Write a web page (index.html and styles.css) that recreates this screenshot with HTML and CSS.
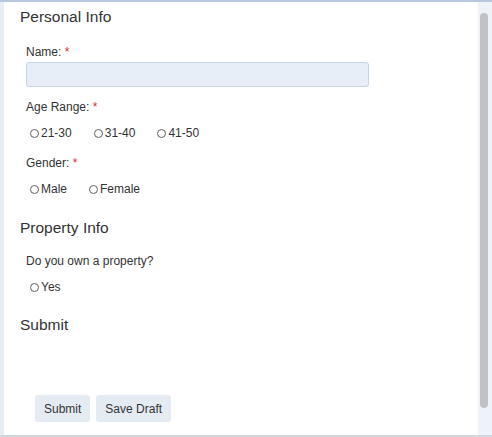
FILE: index.html
```html
<!DOCTYPE html>
<html lang="en">
<head>
<meta charset="utf-8">
<title>Form</title>
<link rel="stylesheet" href="styles.css">
</head>
<body>
<div class="frame">
  <div class="rail"></div>
  <main class="main">
    <section class="section section-first">
      <h2 class="section-title">Personal Info</h2>
      <div class="fields">
        <div class="field">
          <label class="label label-text" for="name">Name: <span class="req">*</span></label>
          <input class="input" id="name" type="text">
        </div>
        <div class="field field-age">
          <div class="label">Age Range: <span class="req">*</span></div>
          <div class="options">
            <label class="option"><input class="radio" type="radio" name="age">21-30</label>
            <label class="option"><input class="radio" type="radio" name="age">31-40</label>
            <label class="option"><input class="radio" type="radio" name="age">41-50</label>
          </div>
        </div>
        <div class="field field-gender">
          <div class="label">Gender: <span class="req">*</span></div>
          <div class="options">
            <label class="option"><input class="radio" type="radio" name="gender">Male</label>
            <label class="option"><input class="radio" type="radio" name="gender">Female</label>
          </div>
        </div>
      </div>
    </section>
    <section class="section">
      <h2 class="section-title">Property Info</h2>
      <div class="fields fields-tight">
        <div class="field">
          <div class="label">Do you own a property?</div>
          <div class="options">
            <label class="option"><input class="radio" type="radio" name="own">Yes</label>
          </div>
        </div>
      </div>
    </section>
    <section class="section section-submit">
      <h2 class="section-title">Submit</h2>
    </section>
    <div class="actions">
      <button class="btn" type="button">Submit</button>
      <button class="btn" type="button">Save Draft</button>
    </div>
  </main>
  <div class="scrollbar"><div class="thumb"></div></div>
</div>
</body>
</html>
```

FILE: styles.css
```css
* {
  box-sizing: border-box;
}

html, body {
  margin: 0;
  padding: 0;
  background: #ffffff;
}

body {
  font-family: "Liberation Sans", Arial, sans-serif;
  color: #333333;
  font-size: 12px;
}

.frame {
  display: flex;
  height: 437px;
  border-top: 2px solid #b8c9df;
  border-bottom: 2px solid #d0d8de;
}

.rail {
  width: 4px;
  background: #e8eef5;
}

.main {
  flex: 1;
  display: flex;
  flex-direction: column;
}

.section-first {
  padding-top: 6px;
}

.section + .section {
  margin-top: 22px;
}

.section-submit {
  margin-top: 21px !important;
}

.section-title {
  margin: 0;
  padding-left: 16px;
  font-size: 15.5px;
  line-height: 18px;
  font-weight: normal;
  color: #333333;
}

.fields {
  padding-left: 22px;
  padding-top: 19px;
}

.fields-tight {
  padding-top: 17px;
}

.field-age {
  margin-top: 13px;
}

.field-gender {
  margin-top: 15px;
}

.label {
  display: block;
  line-height: 14px;
  margin-bottom: 11px;
}

.label-text {
  margin-bottom: 3px;
}

.req {
  color: #e0282e;
}

.input {
  display: block;
  width: 343px;
  height: 25px;
  margin: 0;
  background: #e8eef8;
  border: 1px solid #c6d4ea;
  border-radius: 3px;
  font: inherit;
  padding: 0 6px;
}

.options {
  display: flex;
  align-items: center;
  gap: 18px;
  height: 16px;
}

.option {
  display: flex;
  align-items: center;
  line-height: 16px;
}

.radio {
  appearance: none;
  -webkit-appearance: none;
  width: 9px;
  height: 9px;
  margin: 0 2px 0 4px;
  border: 1px solid #5f5f5f;
  border-radius: 50%;
  background: #ffffff;
}

.actions {
  display: flex;
  gap: 6px;
  margin-top: 61px;
  padding-left: 31px;
}

.btn {
  height: 27px;
  padding: 0 9px;
  border: none;
  border-radius: 3px;
  background: #e5ebf3;
  color: #333333;
  font: inherit;
  font-size: 12px;
}

.scrollbar {
  width: 14px;
  background: #eef2f9;
  padding-top: 11px;
  padding-left: 2px;
}

.thumb {
  width: 8px;
  height: 395px;
  border-radius: 4px;
  background: #c1c2c6;
}
```
